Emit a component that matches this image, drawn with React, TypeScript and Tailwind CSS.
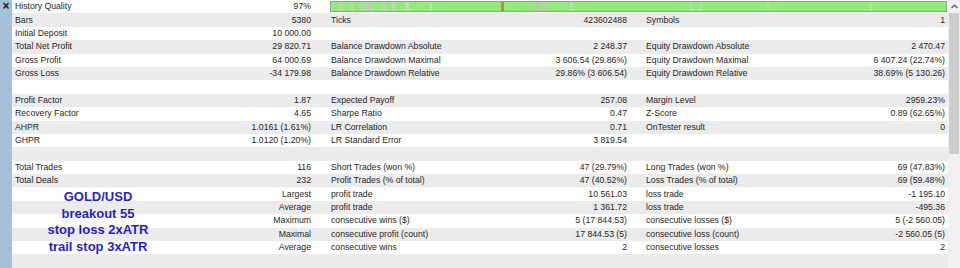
import React from 'react'

type Row = [string, string, string, string, string, string]

const rows: Row[] = [
	['History Quality', '97%', '', '', '', ''],
	['Bars', '5380', 'Ticks', '423602488', 'Symbols', '1'],
	['Initial Deposit', '10 000.00', '', '', '', ''],
	['Total Net Profit', '29 820.71', 'Balance Drawdown Absolute', '2 248.37', 'Equity Drawdown Absolute', '2 470.47'],
	['Gross Profit', '64 000.69', 'Balance Drawdown Maximal', '3 606.54 (29.86%)', 'Equity Drawdown Maximal', '6 407.24 (22.74%)'],
	['Gross Loss', '-34 179.98', 'Balance Drawdown Relative', '29.86% (3 606.54)', 'Equity Drawdown Relative', '38.69% (5 130.26)'],
	['', '', '', '', '', ''],
	['Profit Factor', '1.87', 'Expected Payoff', '257.08', 'Margin Level', '2959.23%'],
	['Recovery Factor', '4.65', 'Sharpe Ratio', '0.47', 'Z-Score', '0.89 (62.65%)'],
	['AHPR', '1.0161 (1.61%)', 'LR Correlation', '0.71', 'OnTester result', '0'],
	['GHPR', '1.0120 (1.20%)', 'LR Standard Error', '3 819.54', '', ''],
	['', '', '', '', '', ''],
	['Total Trades', '116', 'Short Trades (won %)', '47 (29.79%)', 'Long Trades (won %)', '69 (47.83%)'],
	['Total Deals', '232', 'Profit Trades (% of total)', '47 (40.52%)', 'Loss Trades (% of total)', '69 (59.48%)'],
	['', 'Largest', 'profit trade', '10 561.03', 'loss trade', '-1 195.10'],
	['', 'Average', 'profit trade', '1 361.72', 'loss trade', '-495.36'],
	['', 'Maximum', 'consecutive wins ($)', '5 (17 844.53)', 'consecutive losses ($)', '5 (-2 560.05)'],
	['', 'Maximal', 'consecutive profit (count)', '17 844.53 (5)', 'consecutive loss (count)', '-2 560.05 (5)'],
	['', 'Average', 'consecutive wins', '2', 'consecutive losses', '2'],
	['', '', '', '', '', ''],
]

// history quality strip: [x, width, colour]
const marks: [number, number, string][] = [
	[8, 6, '#addf9f'],
	[20, 4, '#addf9f'],
	[30, 14, '#abdc9e'],
	[52, 5, '#addf9f'],
	[62, 3, '#b0e1a3'],
	[75, 4, '#b2e6a6'],
	[100, 2, '#b2e6a6'],
	[171, 3, '#b08c58'],
	[197, 3, '#afd19f'],
	[205, 6, '#a8d596'],
	[214, 4, '#afd19f'],
	[240, 3, '#aee6a0'],
	[360, 2, '#a9e99c'],
	[370, 2, '#a9e99c'],
	[437, 2, '#a9e99c'],
	[540, 2, '#a9e99c'],
]

function QualityBar() {
	return (
		<svg width="617" height="11" className="block">
			<rect x="0.5" y="0.5" width="616" height="10" fill="#8fec78" stroke="#9c9c9c" />
			{marks.map(([x, w, c], i) => (
				<rect key={i} x={x} y="1" width={w} height="9" fill={c} />
			))}
		</svg>
	)
}

export default function App() {
	return (
		<div
			className="relative flex w-[960px] h-[268px] overflow-hidden bg-white text-[#262626] text-[8.7px]"
			style={{ fontFamily: '"Liberation Sans", Arial, sans-serif' }}
		>
			{/* left strip */}
			<div className="w-[12px] bg-[#a8bfd9] flex flex-col items-center">
				<span className="text-[12px] font-bold leading-[13px] text-[#1a1a1a]">×</span>
			</div>

			{/* report rows */}
			<div className="flex flex-col w-[936px]">
				{rows.map((r, i) => (
					<div key={i} className={`flex h-[13.4px] items-center ${i % 2 ? 'bg-[#ebebeb]' : 'bg-white'}`}>
						<div className="flex w-[315px] justify-between pl-[3px] pr-[16px]">
							<span>{r[0]}</span>
							<span>{r[1]}</span>
						</div>
						{i === 0 ? (
							<div className="pl-[3px]">
								<QualityBar />
							</div>
						) : (
							<>
								<div className="flex w-[316px] justify-between pl-[4px] pr-[16px]">
									<span>{r[2]}</span>
									<span>{r[3]}</span>
								</div>
								<div className="flex w-[305px] justify-between pl-[3px] pr-[3px]">
									<span>{r[4]}</span>
									<span>{r[5]}</span>
								</div>
							</>
						)}
					</div>
				))}
			</div>

			{/* scrollbar */}
			<div className="w-[12px] bg-[#f0f0f0] flex flex-col">
				<div className="h-[13px] flex items-center justify-center">
					<svg width="7" height="5" viewBox="0 0 7 5">
						<path d="M0.5 4 L3.5 1 L6.5 4" fill="none" stroke="#606060" strokeWidth="1.2" />
					</svg>
				</div>
				<div className="mx-[1px] h-[141px] bg-[#cdcdcd]" />
			</div>

			{/* strategy note */}
			<div
				className="absolute left-[30px] top-[189px] w-[136px] text-center text-[13px] font-bold leading-[16.7px] text-[#1f1fd6]"
				style={{ fontFamily: 'Arial, "Liberation Sans", sans-serif' }}
			>
				<div>GOLD/USD</div>
				<div>breakout 55</div>
				<div>stop loss 2xATR</div>
				<div>trail stop 3xATR</div>
			</div>
		</div>
	)
}
